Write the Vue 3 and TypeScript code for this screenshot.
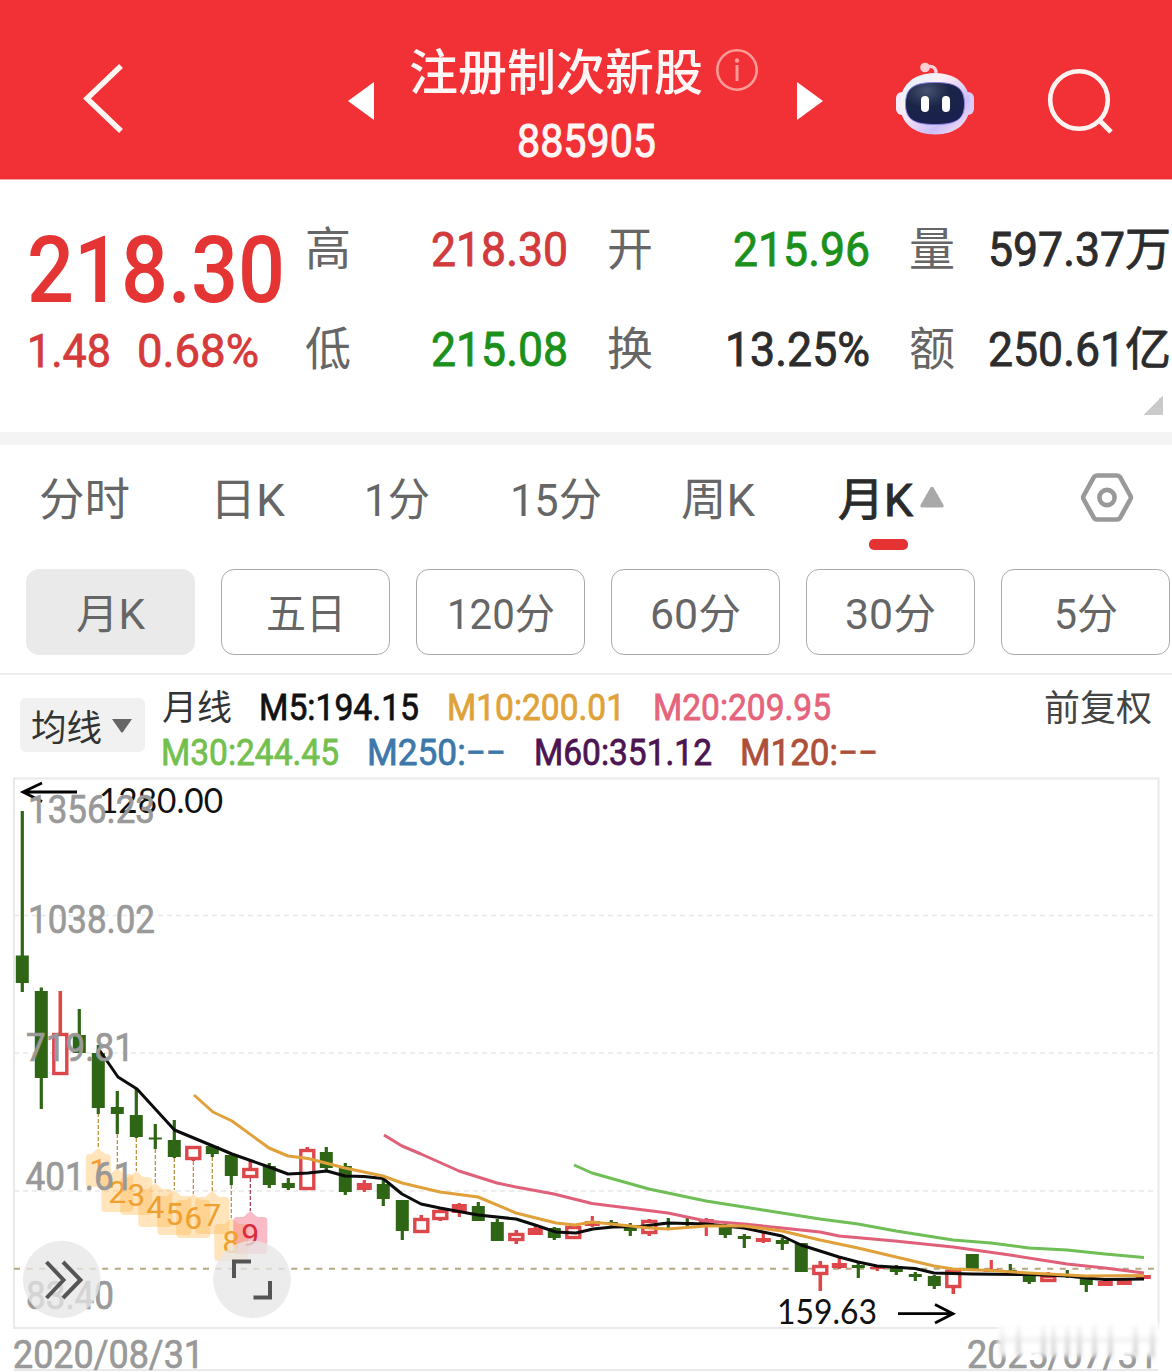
<script setup lang="ts">
import { h, type FunctionalComponent } from 'vue'

interface FitProps { t: string; w: number; s: number; k?: number; b?: number }

// A single line of text fitted to a width; its baseline is the bottom edge of the box.
// b thickens the strokes by that many pixels, for weights between regular and medium.
const Fit: FunctionalComponent<FitProps> = (p) => {
  const height = Math.round(p.s * 0.8)
  return h('svg', { class: 'fit', width: p.w, height, style: { fontSize: p.s + 'px', fontWeight: p.k ?? 400 } }, [
    h('text', {
      x: 0, y: height, textLength: p.w, lengthAdjust: 'spacingAndGlyphs', fill: 'currentColor',
      stroke: p.b ? 'currentColor' : 'none', 'stroke-width': p.b ?? 0,
    }, p.t),
  ])
}
Fit.props = ['t', 'w', 's', 'k', 'b']

const tabs = [
  { t: '分时', w: 91 }, { t: '日K', w: 75 }, { t: '1分', w: 66 },
  { t: '15分', w: 92 }, { t: '周K', w: 74 },
]
const pills = [
  { t: '月K', w: 69 }, { t: '五日', w: 80 }, { t: '120分', w: 108 },
  { t: '60分', w: 91 }, { t: '30分', w: 91 }, { t: '5分', w: 64 },
]
const maRows = [
  [
    { t: 'M5:194.15', w: 160, c: '#111' }, { t: 'M10:200.01', w: 178, c: '#dfa23b' },
    { t: 'M20:209.95', w: 178, c: '#e5647b' },
  ],
  [
    { t: 'M30:244.45', w: 178, c: '#73c04f' }, { t: 'M250:−−', w: 139, c: '#3c78aa' },
    { t: 'M60:351.12', w: 178, c: '#4d1452' }, { t: 'M120:−−', w: 138, c: '#ad5039' },
  ],
]

type Kind = 'g' | 'r' | 'h'
// kind (g: down, r: up, h: up drawn hollow), high, body top, body bottom, low
const raw: [Kind, number, number, number, number][] = [
  ['g', 811, 955.5, 983, 992], ['g', 987.5, 991, 1078, 1109], ['h', 991, 1033, 1075, 1075],
  ['g', 1009, 1035, 1053, 1053], ['g', 1045, 1053, 1108, 1114], ['g', 1091, 1107, 1114, 1134],
  ['g', 1089, 1115, 1137, 1138], ['g', 1124, 1137.5, 1139.5, 1149], ['g', 1120, 1140, 1157, 1158],
  ['h', 1146, 1146, 1160, 1161], ['g', 1145, 1146, 1154, 1157], ['g', 1154, 1155, 1176, 1185],
  ['h', 1160, 1168, 1178, 1178], ['g', 1163, 1166, 1185, 1188], ['g', 1178, 1183, 1188, 1190],
  ['h', 1147, 1149, 1190, 1190], ['g', 1147, 1152, 1168, 1171], ['g', 1163, 1166, 1192, 1195],
  ['r', 1180, 1183, 1190, 1192], ['g', 1180, 1184, 1199, 1206], ['g', 1200, 1200, 1231, 1240],
  ['h', 1215, 1218, 1233, 1233], ['h', 1208, 1210, 1220, 1221], ['r', 1203, 1204, 1213, 1217],
  ['g', 1202, 1206, 1221, 1221], ['g', 1219, 1222, 1241, 1241], ['h', 1230, 1233, 1241, 1244],
  ['r', 1225, 1228, 1235, 1235], ['g', 1227, 1228, 1238, 1240], ['h', 1225, 1226, 1239, 1239],
  ['r', 1216, 1221, 1226, 1227], ['g', 1220, 1222, 1224, 1228], ['g', 1223, 1228, 1231, 1236],
  ['h', 1219, 1220, 1234, 1236], ['g', 1218, 1222, 1224, 1230], ['g', 1218, 1222, 1224, 1226],
  ['r', 1218, 1219, 1224, 1236], ['g', 1224, 1225, 1235, 1238], ['g', 1234, 1236, 1239, 1248],
  ['r', 1233, 1238, 1242, 1243], ['g', 1238, 1240, 1244, 1250], ['g', 1243, 1243, 1272, 1272],
  ['h', 1261, 1265, 1275, 1291], ['r', 1257, 1263, 1268, 1269], ['g', 1262, 1265, 1268, 1278],
  ['r', 1265, 1267, 1269, 1271], ['g', 1265, 1266, 1272, 1275], ['g', 1272, 1274, 1277, 1281],
  ['g', 1275, 1276, 1286, 1289], ['h', 1270, 1270, 1288, 1294], ['g', 1254, 1254, 1270, 1270],
  ['r', 1260, 1269, 1272, 1272], ['g', 1264, 1270, 1272, 1272], ['g', 1274, 1275, 1282, 1284],
  ['h', 1272, 1275, 1282, 1282], ['g', 1270, 1275, 1276, 1278], ['g', 1277, 1279, 1285, 1292],
  ['r', 1280, 1281, 1286, 1286], ['r', 1280, 1280, 1285, 1285], ['r', 1275, 1275, 1279, 1279],
]
const px = (i: number): number => 22.3 + i * 19
const candles = raw.map(([k, hi, top, bottom, lo], i) => ({ k, hi, top, bottom, lo, x: px(i) }))

const lines = [
  { c: '#6fbe56', p: '574,1165 592,1173 649,1189 706,1201 763,1210 820,1219 858,1224 896,1231 953,1240 991,1243 1029,1248 1067,1250 1105,1254 1144,1257.5' },
  { c: '#df6078', p: '384,1135 402,1146 421,1154 459,1171 497,1183 516,1187 554,1194 592,1203.5 668,1213 706,1221 744,1224 782,1228 820,1232 839,1236 895,1241 953,1247 1010,1255 1067,1264 1105,1268 1144,1273' },
  { c: '#0c0c0c', p: '98,1048 118,1077 137,1089 174.5,1130 213,1146 232,1154 269,1167 288,1174 308,1173 327,1171 345,1176 364,1176.5 383,1178.5 402,1194 421,1204 440,1208 478,1215 516,1219 535,1225 556,1232 576,1233 593,1229 613,1227 640,1226.5 668,1223 706,1224 744,1228 763,1232 782,1236 801,1245 839,1257 858,1262 877,1266 915,1268.5 934,1273 972,1274 1030,1274.5 1067,1276 1086,1278 1105,1279.5 1144,1279' },
  { c: '#e0a03a', p: '194,1095 213,1112 232,1121 269,1148 288,1156 308,1158.5 345,1168 383,1176 402,1183 440,1192 478,1197 516,1213 556,1223 575,1225 592,1222 611,1224 649,1228 668,1229 706,1226 744,1226 782,1231 820,1240 858,1248 896,1257 934,1266 953,1269 991,1270.5 1029,1273 1067,1275 1086,1276 1144,1275.5' },
]

const tags = [
  { top: 1148, bottom: 1187, half: 12.5, from: 1113 }, { top: 1168, bottom: 1212, half: 16, from: 1134 },
  { top: 1171, bottom: 1215, half: 16, from: 1138 }, { top: 1183, bottom: 1227, half: 17, from: 1149 },
  { top: 1190, bottom: 1235, half: 17, from: 1158 }, { top: 1194, bottom: 1238, half: 17, from: 1161 },
  { top: 1191, bottom: 1234, half: 17, from: 1157 }, { top: 1218, bottom: 1261, half: 17, from: 1185 },
  { top: 1211, bottom: 1254, half: 17, from: 1178 },
].map((t, i) => {
  const x = px(i + 4)
  const s = t.top + 6
  return {
    ...t, x, n: i + 1, hot: i === 8,
    d: `M${x} ${t.top}L${x + 7} ${s}H${x + t.half - 4}Q${x + t.half} ${s} ${x + t.half} ${s + 4}V${t.bottom - 4}Q${x + t.half} ${t.bottom} ${x + t.half - 4} ${t.bottom}H${x - t.half + 4}Q${x - t.half} ${t.bottom} ${x - t.half} ${t.bottom - 4}V${s + 4}Q${x - t.half} ${s} ${x - t.half + 4} ${s}H${x - 7}Z`,
  }
})

const axis = [
  { t: '1356.23', x: 28, y: 823, w: 127 }, { t: '1038.02', x: 28, y: 933, w: 127 },
  { t: '719.81', x: 26, y: 1061, w: 108 }, { t: '401.61', x: 25.5, y: 1190, w: 108 },
  { t: '83.40', x: 26, y: 1309, w: 88 },
]
</script>

<template>
  <div class="page">
    <header class="head">
      <svg class="back" width="42" height="72"><path d="M38 3L4 35.5L38 68" fill="none" stroke="#fff5f3" stroke-width="5.500" /></svg>
      <svg class="prev" width="26" height="38"><path d="M0 19L26 0V38Z" fill="#fff" /></svg>
      <div class="title">
        <div class="name">
          <Fit t="注册制次新股" :w="294" :s="49" :k="500" />
          <svg class="info" width="44" height="44">
            <circle cx="22" cy="22" r="19.7" fill="none" stroke="#ff9c98" stroke-width="2.6" />
            <circle cx="22" cy="12.5" r="2.2" fill="#ff9c98" /><path d="M22 17V33" stroke="#ff9c98" stroke-width="3" />
          </svg>
        </div>
        <Fit class="code" t="885905" :w="139" :s="46" :b="1" />
      </div>
      <svg class="next" width="26" height="38"><path d="M26 19L0 0V38Z" fill="#fff" /></svg>
      <svg class="robot" width="78" height="76" viewBox="0 0 78 76">
        <defs>
          <linearGradient id="shell" x1="0" y1="0" x2="1" y2="1"><stop offset="0" stop-color="#d9f5fb" /><stop offset=".35" stop-color="#fdeef6" /><stop offset=".7" stop-color="#cdbdf8" /><stop offset="1" stop-color="#fde9f0" /></linearGradient>
          <radialGradient id="visor" cx=".35" cy=".2" r=".8"><stop offset="0" stop-color="#46526f" /><stop offset=".5" stop-color="#1a2447" /><stop offset="1" stop-color="#1b2050" /></radialGradient>
        </defs>
        <path d="M29 5Q41 2 40 13" fill="none" stroke="#ffd0d8" stroke-width="3.4" />
        <circle cx="29" cy="5.5" r="4.800" fill="#ffcdd2" />
        <rect x="0" y="30" width="12" height="23" rx="6" fill="#f4e8fd" />
        <rect x="66" y="30" width="12" height="23" rx="6" fill="#d7cdfa" />
        <path d="M39 11C62 11 74 25 74 42C74 61 60 72.500 39 72.500S4 61 4 42C4 25 16 11 39 11Z" fill="url(#shell)" />
        <path d="M39 20.500C59 20.500 68.500 25 68.500 42C68.500 58 59 62.500 39 62.500S9.500 58 9.500 42C9.500 25 19 20.500 39 20.500Z" fill="url(#visor)" stroke="#8c83e6" stroke-width="1" />
        <rect x="25" y="34" width="8" height="16" rx="4" fill="#fff" /><rect x="46" y="34" width="8" height="16" rx="4" fill="#fff" />
      </svg>
      <svg class="search" width="68" height="68"><circle cx="32" cy="33" r="28.8" fill="none" stroke="#fff3f1" stroke-width="4.6" /><path d="M52 53L64 65" stroke="#fff3f1" stroke-width="5" /></svg>
    </header>

    <section class="quote">
      <div class="price">
        <Fit class="big" t="218.30" :w="258" :s="93" :k="500" />
        <div class="delta"><Fit t="1.48" :w="84" :s="47" :b="0.8" /><Fit t="0.68%" :w="122" :s="47" :b="0.8" /></div>
      </div>
      <div class="stat c1">
        <div><Fit class="label" t="高" :w="46" :s="46" /><Fit class="up" t="218.30" :w="137" :s="49" :b="0.9" /></div>
        <div><Fit class="label" t="低" :w="46" :s="46" /><Fit class="down" t="215.08" :w="137" :s="49" :b="0.9" /></div>
      </div>
      <div class="stat c2">
        <div><Fit class="label" t="开" :w="46" :s="46" /><Fit class="down" t="215.96" :w="137" :s="49" :b="0.9" /></div>
        <div><Fit class="label" t="换" :w="46" :s="46" /><Fit t="13.25%" :w="145" :s="49" :b="0.9" /></div>
      </div>
      <div class="stat c3">
        <div><Fit class="label" t="量" :w="46" :s="46" /><span><Fit t="597.37" :w="137" :s="49" :b="0.9" /><Fit class="unit" t="万" :w="46" :s="46" :b="0.8" /></span></div>
        <div><Fit class="label" t="额" :w="46" :s="46" /><span><Fit t="250.61" :w="137" :s="49" :b="0.9" /><Fit class="unit" t="亿" :w="46" :s="46" :b="0.8" /></span></div>
      </div>
      <i class="corner"></i>
    </section>

    <nav class="tabs">
      <Fit v-for="tab in tabs" :key="tab.t" class="tab" :t="tab.t" :w="tab.w" :s="45" />
      <div class="tab on">
        <Fit t="月K" :w="75" :s="45" :b="1" />
        <svg width="24" height="22"><path d="M10.5 1.5Q12 0 13.5 1.5L23.5 19Q24 21.5 22 21.5H2Q0 21.5 .5 19Z" fill="#a9a9a9" /></svg>
        <i class="mark"></i>
      </div>
      <svg class="gear" width="54" height="52">
        <path d="M17 3.5H37Q39 3.5 40 5L50.5 24Q51.2 25.500 50.5 27L40 46Q39 47.500 37 47.500H17Q15 47.500 14 46L3.500 27Q2.800 25.500 3.500 24L14 5Q15 3.500 17 3.500Z" fill="none" stroke="#999" stroke-width="4.600" />
        <circle cx="27" cy="25.500" r="7.600" fill="none" stroke="#999" stroke-width="4.600" />
      </svg>
    </nav>

    <div class="pills">
      <div v-for="(p, i) in pills" :key="p.t" class="pill" :class="{ sel: i === 0 }"><Fit :t="p.t" :w="p.w" :s="42" /></div>
    </div>

    <section class="ma">
      <div class="pick"><Fit t="均线" :w="71" :s="36" /><svg width="20" height="14"><path d="M0 0H20L11 13Q10 14 9 13Z" fill="#666" /></svg></div>
      <div class="values">
        <div class="row">
          <Fit class="kind" t="月线" :w="70" :s="35" />
          <Fit v-for="m in maRows[0]" :key="m.t" :t="m.t" :w="m.w" :s="36.5" :b="0.8" :style="{ color: m.c }" />
        </div>
        <div class="row second">
          <Fit v-for="m in maRows[1]" :key="m.t" :t="m.t" :w="m.w" :s="36.5" :b="0.8" :style="{ color: m.c }" />
        </div>
      </div>
      <Fit class="adjust" t="前复权" :w="108" :s="36" />
    </section>

    <svg class="chart" width="1172" height="602" viewBox="0 770 1172 602">
      <defs>
        <filter id="soft" x="-20%" y="-60%" width="140%" height="220%"><feGaussianBlur stdDeviation="2 2.500" /></filter>
        <linearGradient id="streak" gradientUnits="userSpaceOnUse" x1="0" y1="1322" x2="0" y2="1360"><stop offset="0" stop-color="#bbb" stop-opacity="0" /><stop offset=".6" stop-color="#b5b5b5" stop-opacity=".8" /><stop offset="1" stop-color="#aaa" stop-opacity=".9" /></linearGradient>
      </defs>
      <path d="M14 778.500H1158.500V1328H14Z" fill="none" stroke="#e9e9e9" stroke-width="2" />
      <path d="M14 1370H1158" stroke="#e9e9e9" stroke-width="2" />
      <path d="M14 915.500H1158M14 1053H1158M14 1191H1158" stroke="#e8e8e8" stroke-width="1.500" stroke-dasharray="5 4" />
      <path d="M14 1268.700H1158" stroke="#b5a982" stroke-width="2" stroke-dasharray="6 6.600" />

      <g v-for="t in tags" :key="t.n">
        <path :d="`M${t.x} ${t.from}V${t.top}`" :stroke="t.hot ? '#a5324a' : '#b58b35'" stroke-width="1.200" stroke-dasharray="4 2" />
        <path :d="t.d" :fill="t.hot ? '#f0566e' : '#ffb545'" :fill-opacity="t.hot ? 0.4 : 0.36" />
      </g>
      <text v-for="t in tags" :key="t.n" class="num" :x="t.x" :y="t.n === 1 ? 1181 : t.top + 34.500" text-anchor="middle" :fill="t.hot ? '#d92b3c' : '#efa02e'">{{ t.n }}</text>

      <g v-for="c in candles" :key="c.x">
        <template v-if="c.k === 'h'">
          <path :d="`M${c.x} ${c.hi}V${c.top}M${c.x} ${c.bottom}V${c.lo}`" stroke="#dc474b" stroke-width="3.600" />
          <rect :x="c.x - 6.500" :y="c.top + 1.500" width="13" :height="c.bottom - c.top - 3" fill="#fff" stroke="#dc474b" stroke-width="3.400" />
        </template>
        <template v-else>
          <path :d="`M${c.x} ${c.hi}V${c.lo}`" :stroke="c.k === 'g' ? '#2f6615' : '#e0474b'" stroke-width="3.200" />
          <rect :x="c.x - (c.k === 'g' ? 6.500 : 7.500)" :y="c.top" :width="c.k === 'g' ? 13 : 15" :height="c.bottom - c.top" :fill="c.k === 'g' ? '#2f6615' : '#e0474b'" />
        </template>
      </g>
      <polyline v-for="l in lines" :key="l.c" :points="l.p" fill="none" :stroke="l.c" stroke-width="3" stroke-linejoin="round" />

      <g fill="none" stroke="#000" stroke-width="2.800">
        <path d="M24 792H77M42 783L23 792L42 801.500" />
        <path d="M898 1313.700H952M935 1304.500L953 1313.700L935 1323" />
      </g>
      <text class="peak" x="99" y="812.500" textLength="124" lengthAdjust="spacingAndGlyphs">1280.00</text>
      <text class="peak" x="777" y="1323.500" textLength="100" lengthAdjust="spacingAndGlyphs">159.63</text>

      <g class="axis">
        <text v-for="a in axis" :key="a.t" :x="a.x" :y="a.y" :textLength="a.w" lengthAdjust="spacingAndGlyphs">{{ a.t }}</text>
        <text x="13" y="1367.500" textLength="191" lengthAdjust="spacingAndGlyphs">2020/08/31</text>
        <text x="967" y="1367.500" textLength="191" lengthAdjust="spacingAndGlyphs">2025/07/31</text>
      </g>
      <g filter="url(#soft)">
        <rect x="998" y="1324" width="162" height="32" fill="#fff" />
        <g fill="url(#streak)">
          <rect x="1001" y="1324" width="2" height="32" /><rect x="1017" y="1324" width="3" height="32" />
          <rect x="1042" y="1324" width="3" height="34" /><rect x="1052" y="1324" width="3" height="34" />
          <rect x="1066" y="1324" width="3" height="34" /><rect x="1078" y="1324" width="3" height="34" />
          <rect x="1093" y="1324" width="3" height="34" /><rect x="1109" y="1324" width="3" height="34" />
          <rect x="1134" y="1324" width="3" height="34" /><rect x="1151" y="1324" width="3" height="34" />
        </g>
        <path d="M1000 1340H1158" stroke="#ddd" stroke-width="2" />
      </g>

      <g fill="#e6e6e6" fill-opacity=".77"><circle cx="61.700" cy="1279.500" r="38.800" /><circle cx="252" cy="1279.500" r="38.800" /></g>
      <g fill="none" stroke="#555" stroke-width="4">
        <path d="M46.500 1262L63.500 1280L46.500 1298M63 1262L80.500 1280L63 1298" />
        <path d="M251 1261.500H234V1278M270 1281V1297.500H253.500" />
      </g>
    </svg>
  </div>
</template>

<style>
body { margin: 0; background: #fff; }
</style>

<style scoped>
.page { width: 1172px; height: 1372px; overflow: hidden; background: #fff; color: #2c2c2c; font-family: Roboto, "Noto Sans CJK SC", sans-serif; }
.page svg { display: block; flex: none; overflow: visible; }
.page :deep(svg.fit) { display: block; flex: none; overflow: visible; }
.head { display: flex; height: 180px; background: #f23136; border-bottom: 1px solid #f7a6a4; color: #fff6f5; box-sizing: border-box; }
.back { margin: 63px 0 0 83px; }
.prev { margin: 82px 0 0 223px; }
.title { display: flex; flex-direction: column; width: 352px; margin-left: 35px; }
.name { display: flex; align-items: flex-end; height: 90px; }
.info { margin: 0 0 -2px 12px; }
.code { margin: 30px 0 0 108px; }
.next { margin: 82px 0 0 36px; }
.robot { margin: 62px 0 0 73px; }
.search { margin: 67px 0 0 73px; }
.quote { display: flex; position: relative; height: 265px; border-bottom: 13px solid #f4f4f4; box-sizing: border-box; }
.price { width: 306px; padding-left: 27px; box-sizing: border-box; color: #e53434; }
.big { margin-top: 48px; }
.delta { display: flex; gap: 26px; margin-top: 27px; color: #d53b3b; }
.stat { display: flex; flex-direction: column; padding-top: 35px; }
.stat > div { display: flex; justify-content: space-between; align-items: flex-end; height: 51px; margin-bottom: 49px; }
.stat span { display: flex; align-items: flex-end; }
.c1 { width: 263px; margin-left: -1px; }
.c2 { width: 263px; margin-left: 39px; }
.c3 { width: 262px; margin-left: 39px; }
.label, .unit { margin-bottom: 1px; }
.label { color: #666; }
.up { color: #d23a3c; }
.down { color: #1b911b; }
.corner { position: absolute; right: 9px; bottom: 17px; width: 20px; height: 20px; background: linear-gradient(135deg, transparent 50%, #cacaca 50%); }
.tabs { display: flex; align-items: flex-end; gap: 79.500px; height: 71px; padding: 0 38px 0 39px; color: #666; }
.tab.on { display: flex; position: relative; gap: 7px; align-items: flex-end; margin-left: 3px; color: #2a2a2a; }
.tab.on > svg:nth-child(2) { margin-bottom: 8px; }
.mark { position: absolute; left: 31px; top: 59px; width: 39px; height: 11px; border-radius: 5px; background: #e53333; }
.gear { margin: 0 0 -8px auto; }
.pills { display: flex; gap: 26px; height: 86px; margin-top: 53px; padding: 0 2px 18px 26px; border-bottom: 2px solid #ededed; }
.pill { display: flex; align-items: flex-end; justify-content: center; width: 169px; box-sizing: border-box; border: 1.500px solid #aaa; border-radius: 13px; padding-bottom: 25px; color: #666; flex: none; }
.pill.sel { border-color: #eaeaea; background: #eaeaea; }
.ma { display: flex; height: 95px; }
.pick { display: flex; align-items: flex-end; gap: 10px; width: 125px; height: 54px; box-sizing: border-box; margin: 23px 0 0 20px; padding: 0 0 11px 11px; border-radius: 6px; background: #f1f1f1; color: #333; }
.pick > svg:last-child { margin-bottom: 8px; }
.values { padding-left: 15px; }
.row { display: flex; align-items: flex-end; gap: 28px; height: 45px; }
.row.second { padding-left: 1px; }
.kind { color: #333; margin: 0 -1px 0 2px; }
.adjust { margin: 17px 20px 0 auto; color: #444; }
.chart text { font-family: Roboto, sans-serif; }
.chart .peak { font-family: Lato, sans-serif; font-size: 34px; fill: #111; }
.chart .axis { font-size: 38.500px; fill: #999; stroke: #999; stroke-width: .7px; }
.chart .num { font-size: 32px; }
</style>
